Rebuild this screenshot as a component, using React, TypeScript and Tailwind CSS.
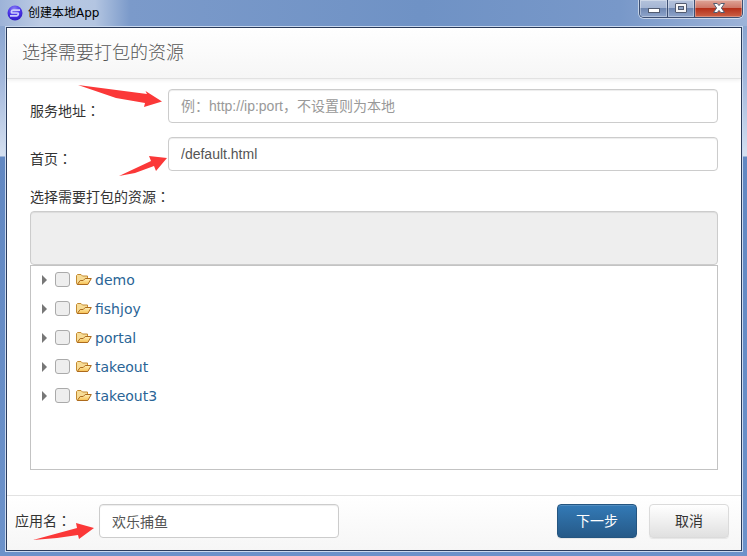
import { useState } from "react";

const RESOURCES = ["demo", "fishjoy", "portal", "takeout", "takeout3"];

const INPUT_CLASS =
  "h-[34px] rounded border border-[#ccc] bg-white px-3 text-sm text-[#555] placeholder:text-[#999] shadow-[inset_0_1px_1px_rgba(0,0,0,0.075)] outline-none";

const TITLE_BUTTON_CLASS =
  "flex items-center justify-center border-r border-[#3c4f72] bg-[linear-gradient(180deg,#b4c3dc_0,#a3b4d2_50%,#7088b1_50%,#8ea5cb_100%)] shadow-[inset_0_0_0_1px_rgba(255,255,255,0.35)]";

function LogoIcon() {
  return (
    <svg className="size-4" viewBox="0 0 16 16" aria-hidden="true">
      <defs>
        <radialGradient id="logo" cx="45%" cy="25%" r="80%">
          <stop offset="0" stopColor="#8d84f4" />
          <stop offset="0.5" stopColor="#4c35ea" />
          <stop offset="1" stopColor="#2f1bc0" />
        </radialGradient>
      </defs>
      <circle cx="8" cy="8" r="7.5" fill="url(#logo)" />
      <path
        d="M13 5.2H6.2Q4.6 5.2 4.4 6.6T5.6 8H10.4Q11.6 8 11.3 9.3T9.8 10.8H3"
        fill="none"
        stroke="#cdcdfc"
        strokeWidth="1.7"
      />
    </svg>
  );
}

function FolderIcon() {
  return (
    <svg className="h-3 w-4" viewBox="0 0 16 12" aria-hidden="true">
      <defs>
        <linearGradient id="flap" x1="0" y1="0" x2="0" y2="1">
          <stop offset="0" stopColor="#fff0b8" />
          <stop offset="1" stopColor="#f6c052" />
        </linearGradient>
      </defs>
      <path
        d="M1.5 10.5L.5 9.5V1.5L1.5 .5H5L6.5 2H11.5V4.5"
        fill="#f7dc96"
        stroke="#c48a30"
        strokeLinejoin="round"
      />
      <path
        d="M1.2 10.5L4.2 6.5H7.2L9.2 4.5H15.3L11.8 10.5Z"
        fill="url(#flap)"
        stroke="#ad6a1c"
        strokeLinejoin="round"
      />
    </svg>
  );
}

/** Red pointer drawn over the form, tip on the right. */
function Arrow({ className, points, viewBox }: { className: string; points: string; viewBox: string }) {
  return (
    <svg className={`pointer-events-none absolute ${className}`} viewBox={viewBox} aria-hidden="true">
      <polygon points={points} fill="#fb3838" />
    </svg>
  );
}

/** Full-width colon, centred in its cell. */
function Colon() {
  return <span className="font-['Noto_Sans_CJK_TC',sans-serif] leading-none">：</span>;
}

function WindowControls() {
  return (
    <div className="flex h-[18px] overflow-hidden rounded-b-[5px] border border-t-0 border-[#3c4f72] shadow-[0_0_0_1px_rgba(255,255,255,0.55)]">
      <button type="button" aria-label="最小化" className={`${TITLE_BUTTON_CLASS} w-7 pt-1`}>
        <svg className="h-[5px] w-3" viewBox="0 0 12 5">
          <rect x=".5" y=".5" width="11" height="4" fill="#fff" stroke="#525c70" />
        </svg>
      </button>
      <button type="button" aria-label="最大化" className={`${TITLE_BUTTON_CLASS} w-[27px] pb-0.5`}>
        <svg className="h-2.5 w-3" viewBox="0 0 12 10">
          <rect x=".5" y=".5" width="11" height="9" rx=".5" fill="#f6f6f6" stroke="#525c70" />
          <rect x="3.5" y="3.5" width="5" height="3" fill="#8fa5c5" stroke="#525c70" />
        </svg>
      </button>
      <button
        type="button"
        aria-label="关闭"
        className="flex w-[47px] items-center justify-center bg-[linear-gradient(180deg,#dfa598_0,#cd7565_48%,#b5301a_50%,#cc6247_100%)] pb-0.5 shadow-[inset_0_0_0_1px_rgba(255,255,255,0.3)]"
      >
        <svg className="h-2.5 w-3" viewBox="0 0 12 10">
          <path
            d="M.5 .5H4.2L6 2.6L7.8 .5H11.5L8.4 5L11.5 9.5H7.8L6 7.4L4.2 9.5H.5L3.6 5Z"
            fill="#fff"
            stroke="#525c70"
          />
        </svg>
      </button>
    </div>
  );
}

export default function App() {
  const [server, setServer] = useState("");
  const [home, setHome] = useState("/default.html");
  const [appName, setAppName] = useState("欢乐捕鱼");

  return (
    <div className="flex min-h-screen flex-col bg-[linear-gradient(180deg,#7e9cca_0,#a3b8dc_80px,#d5e0f0_156px,#6288c2_157px,#6c92ca_100%)] pr-1 pb-1 pl-[5px] font-['Liberation_Sans','Noto_Sans_CJK_SC',sans-serif] text-sm text-[#333]">
      <header className="-mr-1 -ml-[5px] flex h-[26px] items-start justify-between bg-[linear-gradient(90deg,#9db3d8_0,#bccbe4_40px,#b3c5e1_95px,#7b9aca_130px,#6f92c5_420px,#7898c9_620px,#9db3d8_100%)] pr-1 pl-[7px]">
        <div className="flex h-[26px] items-center gap-[5px] text-xs text-black">
          <LogoIcon />
          <span className="font-['DejaVu_Sans','Noto_Sans_CJK_SC',sans-serif]">创建本地App</span>
        </div>
        <WindowControls />
      </header>

      <div className="flex grow flex-col border border-[#cbdaf0]">
        <main className="relative flex grow flex-col border border-[#2b3c5c] bg-white">
          <div className="flex h-[51px] items-center border-b border-[#e2e2e2] bg-linear-to-b from-white to-[#f6f6f6] px-[15px] shadow-[0_1px_4px_rgba(0,0,0,0.08)]">
            <h1 className="text-lg font-light text-[#555]">选择需要打包的资源</h1>
          </div>

          <form className="flex grow flex-col px-[23px] pt-2.5 pb-[25px]">
            <div className="mb-3.5 flex">
              <label htmlFor="server" className="w-[138px] shrink-0 pt-3 leading-5">
                服务地址
                <Colon />
              </label>
              <input
                id="server"
                value={server}
                onChange={(e) => setServer(e.target.value)}
                placeholder="例：http://ip:port，不设置则为本地"
                className={`${INPUT_CLASS} min-w-0 grow`}
              />
            </div>
            <div className="mb-3.5 flex">
              <label htmlFor="home" className="w-[138px] shrink-0 pt-3 leading-5">
                首页
                <Colon />
              </label>
              <input
                id="home"
                value={home}
                onChange={(e) => setHome(e.target.value)}
                className={`${INPUT_CLASS} min-w-0 grow`}
              />
            </div>

            <label htmlFor="selected" className="mt-0.5 mb-1 leading-5">
              选择需要打包的资源
              <Colon />
            </label>
            <textarea
              id="selected"
              readOnly
              className="h-[54px] resize-none rounded border border-[#ccc] bg-[#eee] px-3 py-1.5 shadow-[inset_0_1px_1px_rgba(0,0,0,0.075)] outline-none"
            />
            <ul className="min-h-[205px] grow border border-[#c3c3c3] pl-2.5 font-['DejaVu_Sans',sans-serif] text-[#2a6496]">
              {RESOURCES.map((name) => (
                <li key={name} className="flex h-[29px] items-center pb-0.5">
                  <button type="button" aria-label={`展开 ${name}`} className="mr-2 w-1.5">
                    <svg className="h-2.5 w-1.5" viewBox="0 0 6 10">
                      <path d="M1 0L6 5L1 10Z" fill="#777" />
                    </svg>
                  </button>
                  <label className="flex items-center">
                    <input
                      type="checkbox"
                      className="mr-1.5 size-[15px] appearance-none rounded-[3px] border border-[#aaa] bg-[#eee] checked:bg-[#2a6496]"
                    />
                    <FolderIcon />
                    <span className="ml-[3px]">{name}</span>
                  </label>
                </li>
              ))}
            </ul>
          </form>

          <footer className="flex h-[55px] items-center border-t border-[#e2e2e2] bg-linear-to-b from-white to-[#f6f6f6] pr-3 pb-1 pl-2">
            <label htmlFor="app-name" className="w-[84px] shrink-0">
              应用名
              <Colon />
            </label>
            <input
              id="app-name"
              value={appName}
              onChange={(e) => setAppName(e.target.value)}
              className={`${INPUT_CLASS} w-60`}
            />
            <div className="ml-auto flex gap-3">
              <button
                type="button"
                className="h-[34px] w-20 rounded border border-[#245580] bg-linear-to-b from-[#337ab7] to-[#265a88] text-white shadow-[inset_0_1px_0_rgba(255,255,255,0.15),0_1px_1px_rgba(0,0,0,0.075)]"
              >
                下一步
              </button>
              <button
                type="button"
                className="h-[34px] w-20 rounded border border-[#dbdbdb] bg-linear-to-b from-white to-[#e0e0e0] shadow-[inset_0_1px_0_rgba(255,255,255,0.15),0_1px_1px_rgba(0,0,0,0.075)]"
              >
                取消
              </button>
            </div>
          </footer>

          <Arrow
            className="top-[57px] left-[71px] h-[22px] w-[84px]"
            viewBox="0 0 84 22"
            points="0,0 69,9 67.5,6 84,16.5 66,22 67,18 38,13"
          />
          <Arrow
            className="top-[127px] left-[112px] h-[21px] w-12"
            viewBox="0 0 48 21"
            points="0,21 32,6 30,1 48,3 37,16 35,11 16,18"
          />
          <Arrow
            className="bottom-[10px] left-[26px] h-[17px] w-[61px]"
            viewBox="0 0 61 17"
            points="0,17 44,5 43,0 61,5 46,16 45,12 24,15"
          />
        </main>
      </div>
    </div>
  );
}
